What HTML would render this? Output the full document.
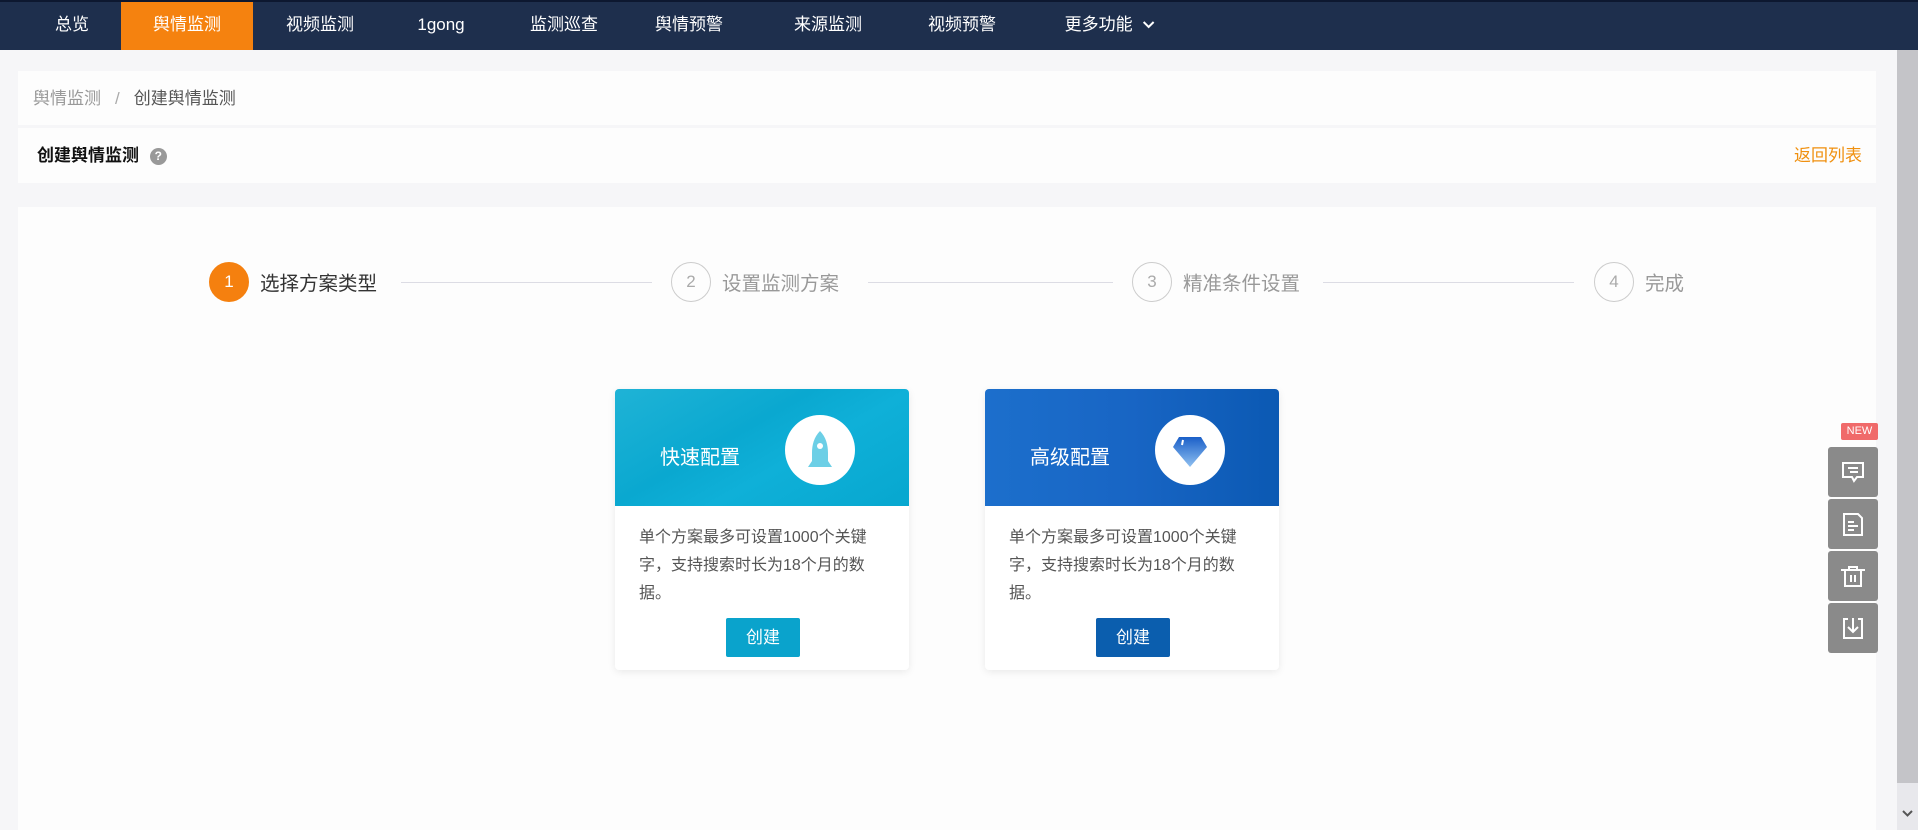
<!DOCTYPE html>
<html><head><meta charset="utf-8">
<style>
*{margin:0;padding:0;box-sizing:border-box}
body{width:1918px;height:830px;overflow:hidden;background:#f6f6f8;font-family:"Liberation Sans","Noto Sans CJK SC",sans-serif;position:relative}
.nav{position:absolute;left:0;top:0;width:1918px;height:50px;background:#1e2f4d;border-top:2px solid #0d1830}
.nav span{position:absolute;top:0;height:48px;line-height:46px;color:#fff;font-size:17px;transform:translateX(-50%);white-space:nowrap}
.act{background:#f5820f;width:132px;text-align:center}
.box{position:absolute;left:18px;width:1858px;background:#fdfdfd}
.sb{position:absolute;right:0;top:50px;width:21px;height:780px;background:#e8e8ec}
.sb i{position:absolute;left:0;top:0;width:21px;height:733px;background:#c4c4c8}
.step{position:absolute;top:262px;width:40px;height:40px;border-radius:50%;border:1px solid #ccc;color:#aaa;font-size:17px;text-align:center;line-height:38px;transform:translateX(-50%)}
.sl{position:absolute;top:267px;font-size:19.5px;color:#999}
.line{position:absolute;top:282px;height:1px;background:#dcdce4}
.card{position:absolute;top:389px;width:294px;height:281px;background:#fff;border-radius:4px;box-shadow:0 2px 8px rgba(0,0,0,.08);overflow:hidden}
.ch{height:117px;position:relative}
.ch b{position:absolute;left:45px;top:52px;color:#fff;font-weight:normal;font-size:20px}
.circ{position:absolute;left:170px;top:26px;width:70px;height:70px;border-radius:50%;background:#fff}
.cb{padding:18px 20px 0 24px;font-size:16px;line-height:28px;color:#555}
.btn{position:absolute;left:111px;top:229px;width:74px;height:39px;color:#fff;font-size:17px;text-align:center;line-height:39px;border-radius:2px}
.side{position:absolute;left:1828px;width:50px;height:50px;background:#8a8a8a;border-radius:3px}
</style></head><body>
<div class="nav">
<span style="left:72px">总览</span>
<span class="act" style="left:187px">舆情监测</span>
<span style="left:320px">视频监测</span>
<span style="left:441px">1gong</span>
<span style="left:564px">监测巡查</span>
<span style="left:689px">舆情预警</span>
<span style="left:828px">来源监测</span>
<span style="left:962px">视频预警</span>
<span style="left:1110px">更多功能 <svg width="14" height="10" viewBox="0 0 14 10" style="margin-left:4px"><path d="M2 2l5 5 5-5" stroke="#fff" stroke-width="2" fill="none"/></svg></span>
</div>
<div class="box" style="top:71px;height:54px;font-size:17px;line-height:56px;padding-left:15px;color:#555"><span style="color:#999">舆情监测</span><span style="color:#aaa;margin:0 14px">/</span>创建舆情监测</div>
<div class="box" style="top:128px;height:55px;font-size:17px;line-height:55px;padding-left:19px;color:#111;font-weight:bold">创建舆情监测 <span style="display:inline-block;width:17px;height:17px;border-radius:50%;background:#999;color:#fff;font-size:12px;line-height:17px;text-align:center;vertical-align:middle;margin-left:6px">?</span><span style="position:absolute;right:14px;top:0;color:#f0900f;font-weight:normal">返回列表</span></div>
<div class="box" style="top:207px;height:623px"></div>

<div class="step" style="left:229px;background:#f5800f;border-color:#f5800f;color:#fff">1</div>
<div class="sl" style="left:260px;color:#333">选择方案类型</div>
<div class="line" style="left:401px;width:251px"></div>
<div class="step" style="left:691px">2</div>
<div class="sl" style="left:722px">设置监测方案</div>
<div class="line" style="left:868px;width:245px"></div>
<div class="step" style="left:1152px">3</div>
<div class="sl" style="left:1183px">精准条件设置</div>
<div class="line" style="left:1323px;width:251px"></div>
<div class="step" style="left:1614px">4</div>
<div class="sl" style="left:1645px">完成</div>

<div class="card" style="left:615px">
<div class="ch" style="background:linear-gradient(150deg,#1fb3d6 0%,#0aa8d0 40%,#0fb0d8 60%,#07a7cf 100%)"><b>快速配置</b><div class="circ"><svg width="70" height="70" viewBox="0 0 70 70"><path d="M35 16c-6 6-8 14-8 22v8l-4 6h24l-4-6v-8c0-8-2-16-8-22z" fill="#6ccfe6"/><circle cx="35" cy="31" r="3" fill="#fff"/></svg></div></div>
<div class="cb">单个方案最多可设置1000个关键字，支持搜索时长为18个月的数据。</div>
<div class="btn" style="background:#0aa3cc">创建</div>
</div>
<div class="card" style="left:985px">
<div class="ch" style="background:linear-gradient(90deg,#1c6fcc 0%,#1865c4 50%,#0b59b3 100%)"><b>高级配置</b><div class="circ"><svg width="70" height="70" viewBox="0 0 70 70"><defs><linearGradient id="g" x1="0" y1="0" x2="0" y2="1"><stop offset="0" stop-color="#1a5fc8"/><stop offset="1" stop-color="#8fc0f0"/></linearGradient></defs><path d="M24 22h22l6 10-17 20-17-20z" fill="url(#g)"/><path d="M28 25l-1 5" stroke="#fff" stroke-width="2"/></svg></div></div>
<div class="cb">单个方案最多可设置1000个关键字，支持搜索时长为18个月的数据。</div>
<div class="btn" style="background:#0b5eae">创建</div>
</div>

<div style="position:absolute;left:1841px;top:423px;width:37px;height:17px;background:#f06a6a;border-radius:2px;color:#fff;font-size:11px;text-align:center;line-height:17px">NEW</div>
<div class="side" style="top:447px"><svg width="50" height="50" viewBox="0 0 50 50"><path d="M15 16h20v14h-6l-3 4-2-4h-9z" stroke="#fff" stroke-width="2" fill="none"/><path d="M20 21h10M22 25h8" stroke="#fff" stroke-width="2"/></svg></div>
<div class="side" style="top:499px"><svg width="50" height="50" viewBox="0 0 50 50"><path d="M16 15h14l4 4v17h-18z" stroke="#fff" stroke-width="2" fill="none"/><path d="M20 23h6M20 27h10M20 31h6" stroke="#fff" stroke-width="2"/></svg></div>
<div class="side" style="top:551px"><svg width="50" height="50" viewBox="0 0 50 50"><path d="M13 19h24M21 19v-3h8v3M17 19v16h16v-16M23 24v7M27 24v7" stroke="#fff" stroke-width="2" fill="none"/></svg></div>
<div class="side" style="top:603px"><svg width="50" height="50" viewBox="0 0 50 50"><path d="M20 16h-4v19h18v-19h-4M25 15v14M20 24l5 5 5-5" stroke="#fff" stroke-width="2" fill="none"/></svg></div>
<div class="sb"><i></i><svg style="position:absolute;left:4px;bottom:12px" width="13" height="9" viewBox="0 0 13 9"><path d="M2 2l4.5 4.5L11 2" stroke="#555" stroke-width="2" fill="none"/></svg></div>
</body></html>
